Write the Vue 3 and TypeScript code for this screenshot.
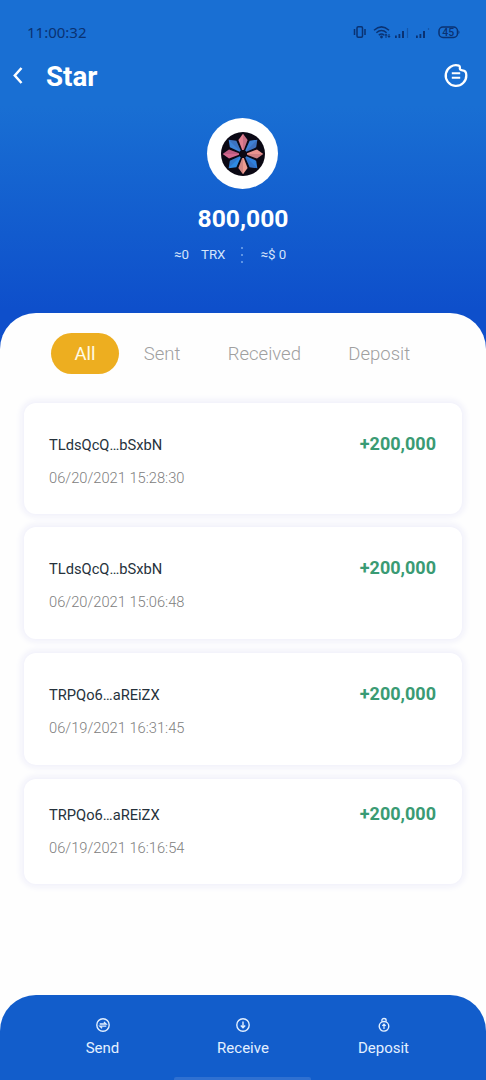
<script setup lang="ts">
interface Transfer {
  address: string
  time: string
  amount: string
}

const tabs: string[] = ['All', 'Sent', 'Received', 'Deposit']

const transfers: Transfer[] = [
  { address: 'TLdsQcQ…bSxbN', time: '06/20/2021 15:28:30', amount: '+200,000' },
  { address: 'TLdsQcQ…bSxbN', time: '06/20/2021 15:06:48', amount: '+200,000' },
  { address: 'TRPQo6…aREiZX', time: '06/19/2021 16:31:45', amount: '+200,000' },
  { address: 'TRPQo6…aREiZX', time: '06/19/2021 16:16:54', amount: '+200,000' },
]

const petals: { angle: number; fill: string }[] = [
  { angle: 0, fill: '#e27f90' },
  { angle: 45, fill: '#3f80d4' },
  { angle: 90, fill: '#e8938f' },
  { angle: 135, fill: '#2f7fdc' },
  { angle: 180, fill: '#ee9c90' },
  { angle: 225, fill: '#2f8ae4' },
  { angle: 270, fill: '#d4688e' },
  { angle: 315, fill: '#3d84d8' },
]
</script>

<template>
  <div class="screen">
    <header class="top">
      <div class="status">
        <span class="clock">11:00:32</span>
        <svg class="status-icons" width="108" height="14" viewBox="0 0 108 14">
          <g fill="none" stroke="#0a3272" stroke-width="1.5">
            <rect x="4" y="1.8" width="5.500" height="10.4" rx="1.2" />
            <path d="M1.500 4v6M12 4v6" />
            <path d="M21 5.2Q28.5-1.5 36 5.2M23.4 7.8Q28.5 3.3 33.6 7.8M25.8 10.2Q28.5 8 31.2 10.2" />
            <rect x="86" y="2" width="18.500" height="10.4" rx="4" />
          </g>
          <g fill="#0a3272">
            <circle cx="28.5" cy="12" r="1.4" />
            <path d="M33 8.5l1.8 2h-1.3v2.5h-1v-2.5h-1.300zM36 13l-1.600-2h1.100v-2h1v2h1.100z" />
            <path d="M42 10.500h1.800v2.500h-1.800zM45.500 9h1.800v4h-1.800zM49 6h2v7h-2z" />
            <path d="M63 10.500h1.800v2.500h-1.800zM66.500 9h1.800v4h-1.800zM70 6h2v7h-2z" />
            <path d="M105.500 5.200q2 2 0 4z" />
          </g>
          <path d="M54.500 3v10M75.500 3v2" stroke="#0a3272" stroke-opacity=".4" stroke-width="1.200" />
          <text x="95.300" y="11" class="battery" text-anchor="middle">45</text>
        </svg>
      </div>

      <div class="title-row">
        <svg class="back" width="12" height="20" viewBox="0 0 12 20">
          <path d="M9.500 2L2.800 9.500l6.700 7.500" fill="none" stroke="#fff" stroke-width="2.500" />
        </svg>
        <h1>Star</h1>
        <svg class="menu" width="26" height="26" viewBox="0 0 26 26" fill="none" stroke="#fff">
          <path d="M16 3.700A10.300 10.300 0 1 0 23.300 13.200C23.300 10 21.700 8.300 19.300 8.300C17.200 8.300 16.600 7.300 16.900 5.500Q17 4.100 16 3.700Z" stroke-width="2.300" stroke-linejoin="round" />
          <path d="M8.800 11.200h8.400M8.800 15.700h8.400" stroke-width="2.100" />
        </svg>
      </div>

      <div class="token">
        <svg width="46" height="46" viewBox="-23 -23 46 46">
          <circle r="22" fill="#0b0814" />
          <g v-for="p in petals" :key="p.angle" :transform="`rotate(${p.angle})`">
            <path d="M-.8-4L-4.600-14L0-20.300L4.600-14L.8-4Z" :fill="p.fill" />
            <path d="M0-4L0-20.300L4.600-14L.8-4Z" fill="#3d1240" fill-opacity=".15" />
          </g>
        </svg>
      </div>
      <div class="balance">800,000</div>
      <div class="worth">
        <span>≈0</span>
        <span class="unit">TRX</span>
        <span class="dots"><i></i><i></i><i></i></span>
        <span>≈$ 0</span>
      </div>
    </header>

    <main class="sheet">
      <nav class="tabs">
        <button v-for="(t, i) in tabs" :key="t" :class="['tab', { active: i === 0 }]">{{ t }}</button>
      </nav>
      <section class="list">
        <article v-for="t in transfers" :key="t.time" class="card">
          <div class="details">
            <div class="address">{{ t.address }}</div>
            <div class="time">{{ t.time }}</div>
          </div>
          <div class="amount">{{ t.amount }}</div>
        </article>
      </section>
    </main>

    <footer class="actions">
      <div class="action">
        <svg width="16" height="16" viewBox="0 0 16 16" fill="none" stroke="#e3f0ff">
          <circle cx="8" cy="8" r="6.200" stroke-width="1.400" />
          <path d="M4.700 7h6.400L8.900 4.900M11.300 9.200H4.900l2.200 2.100" stroke-width="1.300" />
        </svg>
        <span>Send</span>
      </div>
      <div class="action">
        <svg width="16" height="16" viewBox="0 0 16 16" fill="none" stroke="#e3f0ff">
          <circle cx="8" cy="8" r="6.200" stroke-width="1.400" />
          <path d="M8 4.500v6M5.800 8.400L8 10.700l2.200-2.300" stroke-width="1.400" />
        </svg>
        <span>Receive</span>
      </div>
      <div class="action">
        <svg width="16" height="16" viewBox="0 0 16 16" fill="none" stroke="#e3f0ff">
          <circle cx="8" cy="9.300" r="4.800" stroke-width="1.400" />
          <path d="M5.900 4.800V3.200Q5.900 1.500 8 1.500T10.100 3.200V4.800" stroke-width="1.300" />
          <path d="M8 12V7.500M6.300 8.900L8 7.200l1.700 1.700" stroke-width="1.200" />
        </svg>
        <span>Deposit</span>
      </div>
      <div class="home-bar"></div>
    </footer>
  </div>
</template>

<style>
body {
  margin: 0;
}
</style>

<style scoped>
.screen {
  display: flex;
  flex-direction: column;
  width: 486px;
  height: 1080px;
  overflow: hidden;
  background: #fefefe;
  font-family: Roboto, "Liberation Sans", sans-serif;
}

.top {
  box-sizing: border-box;
  flex: none;
  height: 363px;
  background: linear-gradient(#196fd3 0, #196fd3 105px, #0e4fcb 310px);
  color: #fff;
}

.status {
  display: flex;
  align-items: center;
  justify-content: space-between;
  box-sizing: border-box;
  height: 52px;
  padding: 11px 25px 0 27px;
}

.clock {
  font: 15px/20px "Noto Sans", sans-serif;
  color: #0a3272;
}

.battery {
  font: 500 10.5px Roboto, sans-serif;
  fill: #0a3272;
}

.title-row {
  display: flex;
  align-items: center;
  height: 48px;
  padding: 0 17px 0 12px;
}

h1 {
  flex: 1;
  margin: 2px 0 0 22px;
  font-size: 27.7px;
  line-height: 34px;
  font-weight: 700;
}

.back,
.menu {
  flex: none;
}

.menu {
  margin-top: -3px;
}

.token {
  display: flex;
  align-items: center;
  justify-content: center;
  width: 71px;
  height: 71px;
  margin: 18px 0 0 207px;
  border-radius: 50%;
  background: #fff;
}

.balance {
  margin-top: 15px;
  font-size: 24.7px;
  line-height: 30px;
  font-weight: 700;
  text-align: center;
}

.worth {
  display: flex;
  align-items: center;
  margin: 11px 0 0 174px;
  font-size: 13.3px;
  line-height: 20px;
  color: #d5e5fb;
}

.unit {
  margin-left: 12px;
}

.dots {
  display: flex;
  flex-direction: column;
  gap: 5px;
  margin: 0 17px 0 16px;
}

.dots i {
  width: 2px;
  height: 2px;
  background: #5d94e5;
}

.sheet {
  flex: 1;
  margin-top: -50px;
  border-radius: 36px 36px 0 0;
  background: #fefefe;
}

.tabs {
  display: flex;
  padding: 20px 0 0 51px;
}

.tab {
  height: 41px;
  margin: 0;
  padding: 0 23.7px;
  border: 0;
  border-radius: 21px;
  background: none;
  font: 300 18.5px/42px Roboto, sans-serif;
  color: #a0a0a0;
}

.tab.active {
  width: 68px;
  margin-right: 1px;
  padding: 0;
  background: #edae20;
  color: #fffbe6;
  font-weight: 400;
}

.list {
  display: flex;
  flex-direction: column;
  gap: 14px;
  padding: 29px 24px 0;
}

.card {
  display: flex;
  justify-content: space-between;
  box-sizing: border-box;
  height: 112px;
  padding: 32px 26px 0 25px;
  border-radius: 12px;
  background: #fff;
  box-shadow: 0 0 6px 3px #f0f0fa;
}

.card:first-child {
  height: 111px;
  margin-bottom: -1px;
}

.card:last-child {
  height: 105px;
  padding-top: 26px;
}

.address {
  font-size: 14.7px;
  line-height: 20px;
  color: #26323c;
}

.time {
  margin-top: 13px;
  font-size: 14.7px;
  line-height: 20px;
  font-weight: 300;
  color: #808080;
}

.amount {
  margin-top: -2px;
  font-size: 18px;
  line-height: 22px;
  font-weight: 700;
  color: #3a9b74;
}

.actions {
  position: relative;
  display: grid;
  grid-template-columns: repeat(3, 140.5px);
  justify-content: center;
  flex: none;
  box-sizing: border-box;
  height: 85px;
  padding-top: 22px;
  border-radius: 36px 36px 0 0;
  background: #125dcb;
}

.action {
  display: flex;
  flex-direction: column;
  align-items: center;
  gap: 5px;
  font-size: 15px;
  line-height: 20px;
  color: #e3f0ff;
}

.home-bar {
  position: absolute;
  left: 174px;
  bottom: 0;
  width: 137px;
  height: 3px;
  border-radius: 2px 2px 0 0;
  background: #2f70d1;
}
</style>
